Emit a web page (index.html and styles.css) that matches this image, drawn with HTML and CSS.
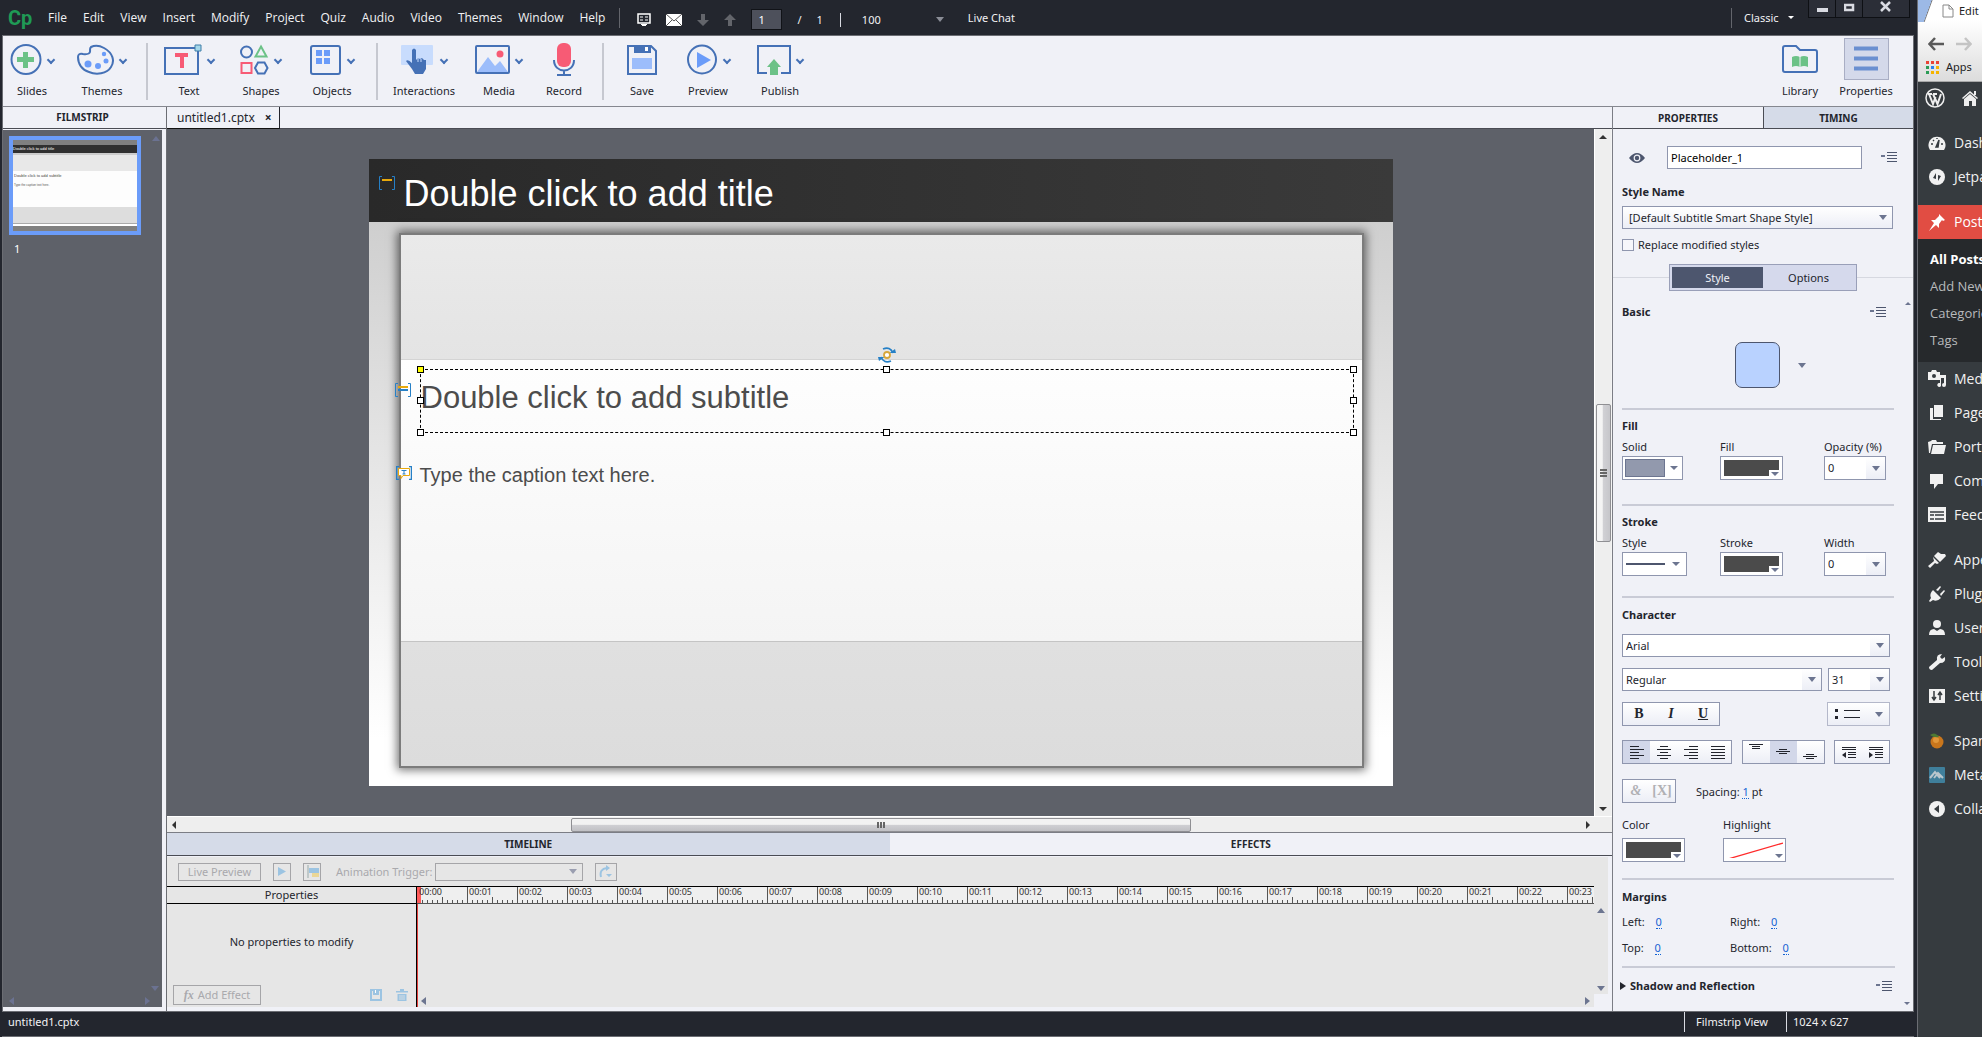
FILE: index.html
```html
<!DOCTYPE html>
<html lang="en">
<head>
<meta charset="utf-8">
<title>untitled1.cptx</title>
<link rel="stylesheet" href="styles.css">
</head>
<body>
<div class="app">
  <header class="menubar">
    <span class="logo">Cp</span>
    <nav class="menus">
      <button>File</button><button>Edit</button><button>View</button><button>Insert</button><button>Modify</button><button>Project</button><button>Quiz</button><button>Audio</button><button>Video</button><button>Themes</button><button>Window</button><button>Help</button>
    </nav>
    <span class="bar"></span>
    <div class="quick">
      <button aria-label="Comments"><svg width="14" height="14" viewBox="0 0 14 14"><path d="M1 1h12v9H1z" fill="none" stroke="#fff" stroke-width="1.500"/><path d="M3 4h3M8 4h3M3 7h3M8 7h3" stroke="#fff"/><path d="M4 11h6v1H9v1H5v-1H4z" fill="#fff"/></svg></button>
      <button aria-label="Mail"><svg width="16" height="12" viewBox="0 0 16 12"><path d="M0 0h16v12H0z" fill="#fff"/><path d="M0 0l8 7 8-7M0 12l6-6M16 12l-6-6" fill="none" stroke="#555"/></svg></button>
      <button aria-label="Next slide"><svg width="12" height="12" viewBox="0 0 12 12"><path d="M4 0h4v6h4l-6 6-6-6h4z" fill="#63656b"/></svg></button>
      <button aria-label="Previous slide"><svg width="12" height="12" viewBox="0 0 12 12"><path d="M4 12h4V6h4L6 0 0 6h4z" fill="#63656b"/></svg></button>
      <input class="page" type="text" value="1" aria-label="Slide">
      <span class="of">/</span><span>1</span>
    </div>
    <span class="bar short"></span>
    <div class="pick zoom"><select aria-label="Zoom"><option>100</option></select></div>
    <button class="chat">Live Chat</button>
    <span class="space"></span>
    <span class="bar"></span>
    <div class="pick mode"><select aria-label="Workspace"><option>Classic</option></select></div>
    <div class="winbtns">
      <button aria-label="Minimize"><svg width="11" height="12"><path d="M0 8h11v4H0z" fill="#d9dbe2"/></svg></button>
      <button aria-label="Maximize"><svg width="11" height="12"><path d="M1 5h8v5H1z" fill="none" stroke="#d9dbe2" stroke-width="2.500"/></svg></button>
      <button class="wide" aria-label="Close"><svg width="12" height="12"><path d="M1 2l9 9M10 2l-9 9" stroke="#d9dbe2" stroke-width="2.500"/></svg></button>
    </div>
  </header>

  <div class="frame">
  <div class="toolbar">
    <button class="tool"><span class="ico"><svg width="32" height="32"><circle cx="16" cy="15.500" r="14.500" class="ln"/><path d="M13 8h5v5h6v5h-6v6h-5v-6H7v-5h6z" fill="#6cc287"/></svg><i class="chev"></i></span>Slides</button>
    <button class="tool"><span class="ico"><svg width="37" height="32"><path d="M14 3q6-3 13 1c9 5 11 13 7 19-4 7-15 8-22 5C5 26 1 20 1 13q0-4 5-3 8 1 7-4 0-2 1-3z" class="ln"/><g fill="#6b9cf9"><circle cx="11" cy="20" r="3.500"/><circle cx="21" cy="22" r="3"/><circle cx="29" cy="17" r="2.500"/><circle cx="27" cy="10" r="2.200"/></g></svg><i class="chev"></i></span>Themes</button>
    <span class="sep"></span>
    <button class="tool"><span class="ico"><svg width="38" height="32"><path d="M1 4h33v26H1z" class="ln"/><path d="M11 9h13v4h-4v11h-4V13h-5z" fill="#f75b75"/><path d="M31 1h6v6h-6z" fill="#a6d8ea" stroke="#3f7fa8"/></svg><i class="chev"></i></span>Text</button>
    <button class="tool"><span class="ico"><svg width="29" height="32"><circle cx="6.500" cy="8" r="5.500" class="ln"/><path d="M21 2.500l5.500 10h-11z" fill="none" stroke="#6cc287" stroke-width="2"/><path d="M1.500 19h10v10h-10z" fill="none" stroke="#f75b75" stroke-width="2"/><path d="M18 18.500h6.500l3 5.500-3 5.500H18L15 24z" class="ln"/></svg><i class="chev"></i></span>Shapes</button>
    <button class="tool"><span class="ico"><svg width="32" height="32"><rect x="1" y="2" width="29" height="28" rx="2" class="ln"/><path d="M6 6h6v6H6zM14 6h6v6h-6zM6 14h6v6H6zM14 14h6v6h-6z" fill="#6b9cf9"/></svg><i class="chev"></i></span>Objects</button>
    <span class="sep"></span>
    <button class="tool"><span class="ico"><svg width="34" height="32"><rect x="0" y="1" width="32" height="20" rx="1" fill="#c8dcfd"/><path d="M11 6q2-3 4 0v10l2-2 2 1 2-1 2 2 2 0v9l-3 5h-8l-3-5-6-8q2-2 6 2z" fill="#4571b6"/><path d="M17 14v4M20 15v3" stroke="#c8dcfd" stroke-width="1"/></svg><i class="chev"></i></span>Interactions</button>
    <button class="tool"><span class="ico"><svg width="35" height="32"><path d="M2 28l11-15 7 9 5-5 8 11z" fill="#9cbdfb"/><rect x="1" y="2" width="33" height="27" rx="1" class="ln"/><circle cx="25" cy="10" r="3.500" fill="#f75b75"/></svg><i class="chev"></i></span>Media</button>
    <button class="tool"><span class="ico"><svg width="22" height="34"><rect x="4" y="0" width="14" height="24" rx="6" fill="#f75b75"/><path d="M1 17c0 14 20 14 20 0M11 27v5M4 32h14" class="ln"/></svg></span>Record</button>
    <span class="sep"></span>
    <button class="tool"><span class="ico"><svg width="32" height="32"><path d="M2 2h23l5 5v23H2z" class="ln"/><path d="M8 1h17v8H8z" fill="#4571b6"/><path d="M19 3h3v4h-3z" fill="#fff"/><path d="M6 14h20v11H6z" fill="#9cbdfb"/></svg></span>Save</button>
    <button class="tool"><span class="ico"><svg width="32" height="32"><circle cx="16" cy="15.500" r="14" class="ln"/><path d="M11 8l14 8-14 8z" fill="#6b9cf9"/></svg><i class="chev"></i></span>Preview</button>
    <button class="tool"><span class="ico"><svg width="34" height="32"><path d="M10 29H1V2h32v27h-9" class="ln"/><path d="M17 15l7 8h-3v8h-8v-8h-3z" fill="#6cc287"/></svg><i class="chev"></i></span>Publish</button>
    <span></span>
    <button class="tool"><span class="ico"><svg width="36" height="30"><path d="M1 3q0-2 2-2h11l4 4h15q2 0 2 2v18q0 2-2 2H3q-2 0-2-2z" class="ln"/><path d="M10 12q4-2 8 0 4-2 8 0v10q-4-2-8 0-4-2-8 0z" fill="#6cc287"/><path d="M18 11v12" stroke="#f0f1f7"/></svg></span>Library</button>
    <button class="tool on"><span class="ico"><svg width="24" height="26"><path d="M0 2.500h24M0 12.500h24M0 22.500h24" stroke="#6a8fd0" stroke-width="4"/></svg></span>Properties</button>
  </div>

  <div class="work">
    <aside class="film">
      <h2 class="head">FILMSTRIP</h2>
      <div class="filmbody">
        <i class="tri up faint right"></i>
        <button class="thumb" aria-label="Slide 1">
          <span class="tt">Double click to add title</span>
          <span class="tb"><span class="ts">Double click to add subtitle</span><span class="tc">Type the caption text here.</span></span>
        </button>
        <span class="num">1</span>
        <div class="filmend"><i class="tri down faint right"></i><div><i class="tri left faint"></i><i class="tri rgt faint"></i></div></div>
      </div>
    </aside>

    <main class="center">
      <div class="tabs"><div class="tab">untitled1.cptx <button aria-label="Close tab">×</button></div></div>
      <div class="stage">
        <div class="slide">
          <div class="stitle">Double click to add title</div>
          <div class="card"><div class="b1"></div><div class="b2"></div><div class="b3"></div></div>
          <div class="sub">Double click to add subtitle
            <i class="h nw"></i><i class="h n"></i><i class="h ne"></i><i class="h w"></i><i class="h e"></i><i class="h sw"></i><i class="h s"></i><i class="h se"></i>
          </div>
          <div class="cap">Type the caption text here.</div>
          <svg class="m1" width="16" height="14"><path d="M3 .5H.5v13H3M13 .5h2.500v13H13" fill="none" stroke="#2680c6"/><path d="M3 3h10v2H3z" fill="#e8a90c"/></svg>
          <svg class="m2" width="16" height="14"><path d="M3 .5H.5v13H3M13 .5h2.500v13H13" fill="none" stroke="#2680c6"/><path d="M3 3h10v2H3z" fill="#e8a90c"/><path d="M3 6h10v2H3z" fill="#2680c6"/></svg>
          <svg class="m3" width="16" height="14"><path d="M3 .5H.5v13H3M13 .5h2.500v13H13" fill="none" stroke="#2680c6" stroke-width="1.500"/><path d="M2.500 2.500h11v7H7l-2 3v-3H2.500z" fill="#fff" stroke="#e8a90c"/><path d="M5.500 4.500h5M8 4v4M6.500 8h3" stroke="#2680c6"/></svg>
          <svg class="rot" width="20" height="16" viewBox="0 0 20 16"><path d="M6 2q7-3 10 4M14 14q-7 3-10-4" fill="none" stroke="#2680c6" stroke-width="1.800"/><path d="M12.500 6H19l-1-4zM7.500 10H1l1 4z" fill="#2680c6"/><circle cx="10" cy="8" r="3" fill="#fff" stroke="#d7a63a" stroke-width="1.800"/></svg>
        </div>
      </div>
      <div class="vs"><i class="tri up dark"></i><div class="grip"><i></i></div><i class="tri down dark"></i></div>
      <div class="hs"><i class="tri left dark"></i><div class="grip"><i></i></div><i class="tri rgt dark"></i></div>
      <section class="time">
        <div class="ttabs"><button class="on">TIMELINE</button><button>EFFECTS</button></div>
        <div class="tpanel">
          <div class="ttools">
            <button class="box live">Live Preview</button>
            <button class="box sq" aria-label="Play"><svg width="8" height="9"><path d="M0 0l8 4.500L0 9z" fill="#9cc4e2"/></svg></button>
            <button class="box sq" aria-label="Effects panel"><svg width="13" height="13"><path d="M2 0v13" stroke="#9aa"/><path d="M3 3h10v5H3z" fill="#9cc4e2"/><path d="M6 8h7v4H6z" fill="#ead696"/></svg></button>
            <label for="trig">Animation Trigger:</label>
            <div class="pick trig"><select id="trig" disabled><option></option></select></div>
            <button class="box redo" aria-label="Motion path"><svg width="14" height="13"><path d="M2 12Q0 4 8 3" fill="none" stroke="#9cc4e2" stroke-width="2"/><path d="M7 0l4 3-4 3zM7 9h6l-3 3z" fill="#9cc4e2"/></svg></button>
          </div>
          <div class="tgrid">
            <div class="plist">
              <div class="phead">Properties</div>
              <p>No properties to modify</p>
              <div class="pfoot"><button class="box add"><b>fx</b> Add Effect</button><button class="flat" aria-label="Save effect"><svg width="12" height="12"><path d="M1 1h10v10H1z" fill="none" stroke="#9cc4e2" stroke-width="2"/><path d="M3 1h6v5H3z" fill="#9cc4e2"/><path d="M5 1h1v3H5z" fill="#fff"/></svg></button><button class="flat" aria-label="Delete effect"><svg width="12" height="12"><path d="M0 2h12v1.500H0zM4 0h4v2H4zM1.500 5h9v7h-9z" fill="#9cc4e2"/><path d="M4 6v5M6 6v5M8 6v5" stroke="#e6e6e6" stroke-width=".8"/></svg></button></div>
            </div>
            <div class="tracks">
              <div class="ruler"><span>00:00</span><span>00:01</span><span>00:02</span><span>00:03</span><span>00:04</span><span>00:05</span><span>00:06</span><span>00:07</span><span>00:08</span><span>00:09</span><span>00:10</span><span>00:11</span><span>00:12</span><span>00:13</span><span>00:14</span><span>00:15</span><span>00:16</span><span>00:17</span><span>00:18</span><span>00:19</span><span>00:20</span><span>00:21</span><span>00:22</span><span>00:23</span></div>
              <div class="tfoot"><i class="tri left slate"></i><i class="tri rgt slate"></i></div>
            </div>
            <div class="tscroll"><i class="tri up slate"></i><i class="tri down slate"></i></div>
          </div>
        </div>
      </section>
    </main>

    <aside class="props">
      <div class="ptabs"><button>PROPERTIES</button><button class="on">TIMING</button></div>
      <div class="pbody">
        <div class="namerow">
          <svg width="16" height="10"><path d="M0 5q8-10 16 0-8 10-16 0z" fill="#4d566e"/><circle cx="8" cy="5" r="2.800" fill="none" stroke="#f0f1f7" stroke-width="1.200"/></svg>
          <input type="text" value="Placeholder_1" aria-label="Name">
          <button class="menu" aria-label="Panel menu"></button>
        </div>
        <h3 class="stylename"><label for="stylesel">Style Name</label></h3>
        <div class="pick stylepick"><select id="stylesel"><option>[Default Subtitle Smart Shape Style]</option></select></div>
        <label class="check"><input type="checkbox">Replace modified styles</label>
        <div class="toggle"><div><button class="on">Style</button><button>Options</button></div></div>
        <div class="hrow basic"><h3>Basic</h3><button class="menu" aria-label="Basic menu"></button><i class="tri up slate sm"></i></div>
        <div class="swrow"><button class="swatch" aria-label="Shape"></button><i class="tri down slate"></i></div>
        <section class="sect g24">
          <h3>Fill</h3>
          <div class="cols">
            <label for="solid">Solid</label><label for="fill">Fill</label><label for="opac">Opacity (%)</label>
            <button id="solid" class="color solid"><i></i><i class="tri down slate"></i></button>
            <button id="fill" class="color"><i></i><i class="tri down slate"></i></button>
            <div class="pick w62"><select id="opac"><option>0</option></select></div>
          </div>
        </section>
        <section class="sect g20">
          <h3>Stroke</h3>
          <div class="cols">
            <label for="sty">Style</label><label for="stro">Stroke</label><label for="wid">Width</label>
            <button id="sty" class="color line"><i></i><i class="tri down slate"></i></button>
            <button id="stro" class="color"><i></i><i class="tri down slate"></i></button>
            <div class="pick w62"><select id="wid"><option>0</option></select></div>
          </div>
        </section>
        <section class="sect char">
          <h3>Character</h3>
          <div class="pick field"><select aria-label="Font family"><option>Arial</option></select></div>
          <div class="row">
            <div class="pick field grow"><select aria-label="Font style"><option>Regular</option></select></div>
            <div class="pick field w62"><select aria-label="Font size"><option>31</option></select></div>
          </div>
          <div class="row">
            <div class="grp biu"><button><b>B</b></button><button><em>I</em></button><button><u>U</u></button></div>
            <button class="grp list" aria-label="Bullets"><svg width="26" height="12"><path d="M0 1h3v3H0zM0 8h3v3H0z" fill="#23252d" class="f"/><path d="M9 2.500h16M9 9.500h16" stroke="#23252d"/></svg><i class="tri down slate"></i></button>
          </div>
          <div class="row align">
            <div class="grp"><button class="on" aria-label="Left"><svg width="14" height="13"><path d="M0 .5h9M0 3.500h14M0 6.500h9M0 9.500h14M0 12.500h9" /></svg></button><button aria-label="Center"><svg width="14" height="13"><path d="M3 .5h8M0 3.500h14M3 6.500h8M0 9.500h14M3 12.500h8"/></svg></button><button aria-label="Right"><svg width="14" height="13"><path d="M5 .5h9M0 3.500h14M5 6.500h9M0 9.500h14M5 12.500h9"/></svg></button><button aria-label="Justify"><svg width="14" height="13"><path d="M0 .5h14M0 3.500h14M0 6.500h14M0 9.500h14M0 12.500h14"/></svg></button></div>
            <div class="grp"><button class="vt" aria-label="Top"><svg width="14" height="6"><path d="M0 .5h14M3 2.500h8M3 4.500h8" /></svg></button><button class="on" aria-label="Middle"><svg width="14" height="6"><path d="M3 .5h8M0 2.500h14M3 4.500h8"/></svg></button><button class="vb" aria-label="Bottom"><svg width="14" height="6"><path d="M3 .5h8M0 2.500h14M3 4.500h8"/></svg></button></div>
            <div class="grp"><button aria-label="Outdent"><svg width="14" height="13"><path d="M0 1.500h14M0 3.500h14M6 6.500h8M6 8.500h8M6 11.500h8"/><path d="M4 6v6L0 9z" class="f"/></svg></button><button aria-label="Indent"><svg width="14" height="13"><path d="M0 1.500h14M0 3.500h14M6 6.500h8M6 8.500h8M6 11.500h8"/><path d="M0 6v6l4-3z" class="f"/></svg></button></div>
          </div>
          <div class="row amp">
            <div class="grp dim"><button><em>&amp;</em></button><button>[X]</button></div>
            <span class="spacing">Spacing: <a href="#">1</a> pt</span>
          </div>
          <div class="cols colrs">
            <label for="col">Color</label><label for="hil">Highlight</label><span></span>
            <button id="col" class="color"><i></i><i class="tri down slate"></i></button>
            <button id="hil" class="color none"><svg width="56" height="18"><path d="M1 17L56 1" stroke="#ff2a2a" stroke-width="1.300"/></svg><i class="tri down slate"></i></button>
          </div>
        </section>
        <section class="sect marg">
          <h3>Margins</h3>
          <div class="m2col"><span>Left: <a href="#">0</a></span><span>Right: <a href="#">0</a></span><span>Top: <a href="#">0</a></span><span>Bottom: <a href="#">0</a></span></div>
        </section>
        <section class="sect shad">
          <div class="hrow"><i class="tri rgt black"></i><h3>Shadow and Reflection</h3><button class="menu" aria-label="Shadow menu"></button></div>
          <i class="tri down slate sm end"></i>
        </section>
      </div>
    </aside>
  </div>
  </div>

  <footer class="status"><span>untitled1.cptx</span><span class="s2">Filmstrip View</span><span class="s3">1024 x 627</span></footer>
</div>

<div class="browser">
  <div class="chrome">
    <div class="ctab"><i></i><svg width="12" height="14"><path d="M1 1h6l4 4v8H1zM7 1v4h4" fill="#fff" stroke="#888"/></svg>Edit</div>
    <div class="cnav"><button aria-label="Back"><svg width="16" height="14"><path d="M7 1L1.500 7 7 13M2 7h14" fill="none" stroke="#5a5a5a" stroke-width="2.500"/></svg></button><button aria-label="Forward"><svg width="16" height="14"><path d="M9 1l5.500 6L9 13M14 7H0" fill="none" stroke="#c4c4c4" stroke-width="2.500"/></svg></button></div>
    <div class="capps"><svg width="13" height="13"><path d="M0 0h3v3H0zM5 0h3v3H5zM10 0h3v3h-3z" fill="#ea4335"/><path d="M0 5h3v3H0z" fill="#2c9c56"/><path d="M5 5h3v3H5z" fill="#2b80ee"/><path d="M10 5h3v3h-3zM10 10h3v3h-3z" fill="#f5b400"/><path d="M0 10h3v3H0z" fill="#2c9c56"/><path d="M5 10h3v3H5z" fill="#f5b400"/></svg>Apps</div>
  </div>
  <div class="wpbar"><svg width="20" height="20"><circle cx="10" cy="10" r="9" fill="none" stroke="#eee" stroke-width="1.500"/><path d="M4 6l4 10 2.500-7M8 6l4.500 10L16 6M3 6h4M8 6h4" fill="none" stroke="#eee" stroke-width="2"/></svg><svg width="16" height="16"><path d="M0 8l8-7 8 7-1 1-7-6-7 6zM12 1h2v4h-2z" fill="#eee"/><path d="M2 9l6-5 6 5v7h-4v-5H7v5H2z" fill="#eee"/></svg></div>
  <nav class="wp">
    <a href="#"><svg width="18" height="18"><path d="M1 14a8.500 8.500 0 1 1 16 0l-1 2H2z" fill="#f1f1f1"/><path d="M8 13l3-7-1 7zM3 10h2M13 10h2M5 6l1 1M9 4v1" stroke="#363b3f" stroke-width="1.500"/></svg>Dashboard</a>
    <a href="#"><svg width="18" height="18"><circle cx="9" cy="9" r="8" fill="#f1f1f1"/><path d="M8 5v6l-3-1zM10 13V7l3 1z" fill="#363b3f"/></svg>Jetpack</a>
    <a href="#" class="cur gap"><svg width="18" height="18"><path d="M11 1l6 6-2 1-1-1-3 4 0 4-3-3-7 6 5-8-3-3h4l4-4z" fill="#fff"/></svg>Posts</a>
    <div class="subnav"><a href="#" class="b">All Posts</a><a href="#">Add New</a><a href="#">Categories</a><a href="#">Tags</a></div>
    <a href="#"><svg width="18" height="18"><path d="M0 2h3l1-2h4l1 2h3v8H0zM12 5h6v10a2 2 0 1 1-2-2V8h-3v8a2 2 0 1 1-2-3h1z" fill="#f1f1f1"/><circle cx="6" cy="6" r="2" fill="#363b3f"/></svg>Media</a>
    <a href="#"><svg width="18" height="18"><path d="M6 1h9v12H6zM2 4h3v11h8v1H2z" fill="#f1f1f1"/></svg>Pages</a>
    <a href="#"><svg width="18" height="18"><path d="M0 4l3-1 1-1h4l1 2h6v2H4L2 15H1zM5 7h13l-2 9H3z" fill="#f1f1f1"/></svg>Portfolio</a>
    <a href="#"><svg width="18" height="18"><path d="M2 2h13v10H10l-4 5v-5H2z" fill="#f1f1f1"/></svg>Comments</a>
    <a href="#"><svg width="18" height="18"><path d="M0 1h18v15H0z" fill="#f1f1f1"/><path d="M2 6h14M2 9h4M7 9h9M2 13h4M7 13h9" stroke="#363b3f" stroke-width="1.500"/></svg>Feedback</a>
    <a href="#" class="gap"><svg width="18" height="18"><path d="M6 5l4-4 3 2h4l1 2-6 6zM5 6l6 6-2 1-2-1-5 5-2-2 6-5z" fill="#f1f1f1"/></svg>Appearance</a>
    <a href="#"><svg width="18" height="18"><path d="M5 5l8 8q-4 4-8 2l-3 2-1-1 2-3q-2-4 2-8zM8 5l4-4 1 1-3 4zM12 9l4-4 1 1-4 5z" fill="#f1f1f1"/></svg>Plugins</a>
    <a href="#"><svg width="18" height="18"><circle cx="9" cy="5" r="4" fill="#f1f1f1"/><path d="M1 16q0-6 5-6l3 2 3-2q5 0 5 6z" fill="#f1f1f1"/></svg>Users</a>
    <a href="#"><svg width="18" height="18"><path d="M17 4q1 6-5 6l-8 7q-3 0-3-3l8-7q-1-6 5-6l-2 3 2 2z" fill="#f1f1f1"/></svg>Tools</a>
    <a href="#"><svg width="18" height="18"><path d="M1 2h16v14H1z" fill="#f1f1f1"/><path d="M6 4v9M4 10l2 3 2-3M12 13V5M10 8l2-3 2 3" fill="none" stroke="#363b3f" stroke-width="1.500"/></svg>Settings</a>
    <a href="#" class="gap"><svg width="18" height="18"><circle cx="9" cy="10" r="6.500" fill="#c9761c"/><circle cx="8" cy="8" r="3" fill="#e2973a"/><path d="M2 3q5-4 9 2-5 1-9-2z" fill="#4d7a33"/></svg>Spam</a>
    <a href="#"><svg width="18" height="18"><rect x="1" y="1" width="16" height="16" rx="1" fill="#3f7f9b"/><path d="M2 12l5-6 5 6M6 12l4-5 5 5" fill="none" stroke="#b9c6cc" stroke-width="2"/></svg>Meta Slider</a>
    <a href="#"><svg width="18" height="18"><circle cx="9" cy="9" r="8" fill="#f1f1f1"/><path d="M11 5v8L6 9z" fill="#363b3f"/></svg>Collapse menu</a>
  </nav>
</div>
</body>
</html>
```
FILE: styles.css
```css
* { box-sizing: border-box; }
body { margin: 0; min-height: 100vh; display: grid; grid-template-columns: minmax(0, 1fr) 64px; background: #23262e; font: 11px/16px "Noto Sans", "Open Sans", sans-serif; color: #23252d; }
button, input, select { font: inherit; color: inherit; margin: 0; }
button { background: none; border: 0; padding: 0; cursor: pointer; white-space: nowrap; }
h2, h3, p { margin: 0; font-size: 11px; }
svg { display: block; flex: none; }
.app { display: flex; flex-direction: column; min-height: 100vh; background: #23262e; border-right: 1px solid #6b6d73; padding: 0 3px 0 2px; }

/* triangles */
.tri { flex: none; width: 0; height: 0; border: 4px solid transparent; color: #6c7590; }
.tri.down { border-top: 5px solid; border-bottom: 0; }
.tri.up { border-bottom: 5px solid; border-top: 0; }
.tri.left { border-right: 5px solid; border-left: 0; }
.tri.rgt { border-left: 5px solid; border-right: 0; }
.tri.faint { color: #6b7291; }
.tri.dark { color: #333; border-width: 4px; }
.tri.black { color: #23252d; border-left-width: 6px; }
.tri.sm { border-width: 3px; }
.tri.sm.up, .tri.dark.up { border-top-width: 0; }
.tri.sm.down, .tri.dark.down { border-bottom-width: 0; }
.tri.dark.left { border-left-width: 0; }
.tri.dark.rgt { border-right-width: 0; }

/* drop-downs */
.pick { display: grid; align-items: center; background: linear-gradient(#fff, #eceef6); border: 1px solid #8f96ae; height: 23px; }
.pick select { grid-area: 1 / 1; appearance: none; background: none; border: 0; outline: 0; width: 100%; height: 100%; padding: 0 20px 0 6px; color: #23252d; opacity: 1; }
.pick::after { content: ""; grid-area: 1 / 1; justify-self: end; margin-right: 5px; border: 4px solid transparent; border-top: 5px solid #6c7590; border-bottom: 0; pointer-events: none; }
.pick.field select, .pick.w62 select { background: linear-gradient(#fff, #fff) 0 0 / calc(100% - 19px) 100% no-repeat; padding-left: 3px; }
.w62 { width: 62px; }

/* menu bar */
.menubar { display: flex; align-items: center; height: 35px; color: #f2f2f4; font-size: 12px; }
.logo { width: 46px; padding-left: 6px; color: #1f9a55; font: 700 20px/24px Roboto, sans-serif; }
.menus { display: flex; gap: 16px; margin-right: 14px; font-family: "Open Sans", "Noto Sans", sans-serif; }
.bar { width: 1px; height: 20px; background: #63656c; }
.bar.short { height: 14px; background: #d9dbe2; margin-top: 5px; }
.quick { display: flex; align-items: center; margin: 4px 17px 0; gap: 15px; font-size: 11px; }
.page { width: 31px; height: 21px; background: #4d505b; border: 1px solid #111318; padding: 0 6px; color: #fff; }
.zoom.pick, .mode.pick { background: none; border: 0; }
.zoom.pick { width: 90px; margin: 4px 0 0 15px; font-size: 11px; }
.zoom.pick select, .mode.pick select { color: #f2f2f4; }
.zoom.pick::after { border-top-color: #8a8d96; margin-right: 2px; }
.chat { margin-left: 22px; font-size: 11px; }
.space { flex: 1; }
.mode.pick { width: 67px; margin-right: 9px; font-size: 11px; }
.mode.pick::after { border-width: 3px 3px 0; border-top-color: #fff; }
.mode.pick select { padding: 0 0 0 12px; }
.winbtns { display: flex; align-self: flex-start; height: 18px; margin-right: 4px; border: 1px solid #0e1014; border-top: 0; background: #2b2e37; }
.winbtns button { width: 27px; display: grid; justify-content: center; border-right: 1px solid #0e1014; }
.winbtns .wide { width: 46px; border: 0; }

.frame { flex: 1; display: flex; flex-direction: column; border: 1px solid #6b6d73; background: #f0f1f7; }

/* tool bar */
.toolbar { display: grid; grid-template-columns: 58px 82px 8px 76px 68px 74px 16px 78px 72px 58px 20px 58px 74px 70px minmax(0, 1fr) 54px 78px 8px; height: 71px; border-bottom: 1px solid #85878f; }
.tool { display: flex; flex-direction: column; align-items: center; padding-top: 2px; }
.ico { display: flex; align-items: center; gap: 5px; height: 43px; margin-bottom: 2px; }
.tool.on .ico { width: 45px; height: 42px; justify-content: center; background: #d4d9ea; border: 1px solid #a9aec4; margin-bottom: 3px; }
.ln { fill: none; stroke: #4571b6; stroke-width: 2; }
.chev { width: 6px; height: 6px; margin: 0 1px; border: solid #4571b6; border-width: 0 2px 2px 0; transform: rotate(45deg); }
.sep { justify-self: center; width: 2px; height: 57px; margin-top: 7px; background: #c6c8d0; }

/* workspace */
.work { flex: 1; display: grid; grid-template-columns: 164px minmax(0, 1fr) 301px; }
.head { height: 22px; padding-right: 4px; font-size: 10px; line-height: 20px; text-align: center; border-bottom: 1px solid #4a4c54; }
.film { display: flex; flex-direction: column; border-right: 1px solid #6b6d73; padding-bottom: 4px; }
.filmbody { flex: 1; display: grid; grid-template-columns: 136px 1fr; grid-template-rows: auto auto 1fr; margin: 1px 4px 0 0; padding: 6px 0 0 6px; background: #5e6169; }
.filmbody > .up { grid-area: 1 / 2; justify-self: center; margin-left: 4px; }
.thumb { grid-area: 1 / 1; width: 132px; height: 99px; border: 4px solid #6b9cf9; background: #808080; padding: 5px 0; text-align: left; overflow: hidden; }
.thumb span { display: block; font-family: "Liberation Sans", Arial, sans-serif; }
.tt { height: 8px; background: #303030; color: #fff; font-size: 4px; line-height: 8px; }
.tb { height: 73px; padding: 20px 1px 0; background: linear-gradient(#ccc 0 2px, #e8e8e8 2px 18px, #fdfdfd 18px 54px, #ddd 54px 70px, #aaa 70px 71px, #fff 71px); }
.ts { font-size: 4px; line-height: 6px; color: #444; }
.tc { font-size: 3px; line-height: 12px; color: #555; }
.num { grid-area: 2 / 1; padding: 6px 5px; color: #fff; }
.filmend { grid-area: 3 / 1 / 4 / 3; align-self: end; display: grid; justify-items: end; gap: 6px; padding: 0 3px 2px 0; }
.filmend div { width: 100%; display: flex; justify-content: space-between; padding-right: 9px; }

.center { display: grid; grid-template-columns: minmax(0, 1fr) 18px; grid-template-rows: 22px minmax(660px, 1fr) 17px 178px; }
.tabs { grid-column: 1 / 3; border-bottom: 1px solid #4a4c54; }
.tab { width: 113px; height: 22px; padding-left: 10px; border-right: 1px solid #23252d; border-bottom: 1px solid #111; font-size: 12px; line-height: 21px; white-space: nowrap; }
.tab button { margin-left: 7px; line-height: 14px; font-weight: 700; }
.stage { display: grid; place-content: center; background: #5e6169; overflow: hidden; }
.slide { position: relative; width: 1024px; height: 627px; display: flex; flex-direction: column; background: linear-gradient(#cfcfcf 63px, #fff 580px); font-family: "Liberation Sans", Arial, sans-serif; }
.stitle { height: 63px; padding-left: 35px; font-size: 36px; line-height: 70px; color: #fff; background: linear-gradient(90deg, #292929, #3a3a3a); }
.card { margin: 11px 29px 18px 30px; flex: 1; display: flex; flex-direction: column; border: 2px solid #7c7c7c; box-shadow: 0 0 9px 2px rgba(0, 0, 0, .55); }
.b1 { flex: 124; background: linear-gradient(#eaeaea, #e4e4e4); border-bottom: 1px solid #d4d4d4; }
.b2 { flex: 283; background: linear-gradient(#fefefe, #f4f4f4); }
.b3 { flex: 124; background: linear-gradient(#e0e0e0, #dcdcdc); border-top: 1px solid #c4c4c4; }
.sub { position: absolute; left: 51px; top: 210px; width: 934px; height: 64px; border: 1px dashed #000; font-size: 31px; line-height: 56px; color: #4c4c4c; }
.cap { position: absolute; left: 51px; top: 303px; font-size: 20px; line-height: 26px; color: #4c4c4c; }
.h { position: absolute; width: 7px; height: 7px; border: 1px solid #000; background: #fff; }
.h.nw, .h.n, .h.ne { top: -4px; }
.h.w, .h.e { top: 27px; }
.h.sw, .h.s, .h.se { bottom: -4px; }
.h.nw, .h.w, .h.sw { left: -4px; }
.h.n, .h.s { left: 462px; }
.h.ne, .h.e, .h.se { right: -4px; }
.h.nw { background: #ff0; }
.m1, .m2, .m3, .rot { position: absolute; }
.m1 { left: 10px; top: 17px; }
.m2 { left: 26px; top: 224px; }
.m3 { left: 27px; top: 307px; }
.rot { left: 508px; top: 188px; }

.vs, .hs { display: flex; align-items: center; justify-content: space-between; background: #eeeeee; }
.vs { flex-direction: column; padding: 6px 0 5px; border-left: 1px solid #fff; border-right: 1px solid #f4f4f4; }
.vs .grip { width: 15px; height: 138px; display: grid; place-content: center; border: 1px solid #8f8f93; border-radius: 2px; background: linear-gradient(90deg, #f4f4f4 40%, #d0d0d4 50%, #c6c6ca); }
.vs .grip i { width: 7px; height: 8px; background: repeating-linear-gradient(#666 0 2px, transparent 2px 3px); }
.hs { grid-column: 1 / 3; padding: 0 22px 0 5px; border-bottom: 1px solid #7b7d85; border-top: 1px solid #fff; }
.hs .grip { width: 620px; height: 14px; display: grid; place-content: center; border: 1px solid #8f8f93; border-radius: 2px; background: linear-gradient(#f2f2f2 45%, #cfcfd3 50%, #c0c0c4); }
.hs .grip i { width: 8px; height: 6px; background: repeating-linear-gradient(90deg, #666 0 2px, transparent 2px 3px); }

/* timeline */
.time { grid-column: 1 / 3; display: flex; flex-direction: column; padding-bottom: 4px; }
.ttabs, .ptabs { display: grid; grid-template-columns: 1fr 1fr; height: 22px; border-bottom: 1px solid #4a4c54; font-weight: 700; font-size: 10px; line-height: 20px; }
.ttabs { height: 23px; }
.ttabs .on, .ptabs .on { background: #d5dbe8; }
.tpanel { flex: 1; display: flex; flex-direction: column; margin: 1px 4px 0 0; background: #e6e6e6; }
.ttools { display: flex; align-items: center; height: 29px; padding: 0 11px; color: #a9a9ad; flex: none; }
.box { height: 18px; border: 1px solid #a5a5a8; color: #a9a9ad; display: grid; place-content: center; grid-auto-flow: column; line-height: 14px; }
.live { width: 83px; margin-right: 12px; }
.sq { width: 18px; margin-right: 12px; }
.ttools label { margin: 0 3px; white-space: nowrap; }
.pick.trig { width: 148px; height: 18px; margin-right: 12px; background: #e6e6e6; border-color: #a5a5a8; }
.trig::after { border-top-color: #9a9eb0; }
.redo { width: 22px; }
.tgrid { flex: 1; display: grid; grid-template-columns: 250px minmax(0, 1fr) 14px; }
.plist { display: flex; flex-direction: column; border-top: 1px solid #000; border-right: 1px solid #000; }
.phead { height: 17px; border-bottom: 1px solid #000; text-align: center; line-height: 16px; }
.plist p { flex: 1; padding-top: 30px; text-align: center; font-weight: 400; }
.pfoot { display: flex; align-items: center; padding: 0 8px 2px 6px; gap: 14px; }
.add { width: 88px; height: 20px; margin-right: auto; gap: 4px; }
.add b { font-style: italic; font-family: "Liberation Serif", serif; font-size: 12px; }
.tracks { display: flex; flex-direction: column; justify-content: space-between; border-left: 1px solid #e2403c; }
.ruler { display: flex; height: 18px; margin-left: -1px; overflow: hidden; border-top: 1px solid #000; border-bottom: 1px solid #555; background: #efefef; font-size: 9px; line-height: 10px; }
.ruler span { flex: 0 0 50px; padding-left: 2px; color: #333; background: linear-gradient(#555, #555) 0 0 / 1px 100% no-repeat, linear-gradient(#555, #555) 25px 100% / 1px 6px no-repeat, repeating-linear-gradient(90deg, #555 0 1px, transparent 1px 5px) 0 100% / 100% 3px no-repeat; }
.ruler span:first-child { box-shadow: inset 4px 0 #ff5b5b; }
.tfoot { display: flex; justify-content: space-between; padding: 0 4px 2px 3px; }
.tscroll { display: flex; flex-direction: column; justify-content: space-between; align-items: center; padding: 22px 0 16px; background: linear-gradient(#f0f1f7, #f0f1f7) 0 100% / 100% 13px no-repeat; }

/* properties */
.props { border-left: 1px solid #7b7d85; min-width: 0; }
.ptabs .on { border-left: 1px solid #4a4c54; }
.pbody { padding: 17px 0 0 9px; }
.namerow { display: flex; align-items: center; height: 23px; padding: 0 16px 0 7px; }
.namerow input { width: 195px; height: 23px; margin: 0 auto 0 22px; border: 1px solid #8f96ae; padding: 0 3px; background: #fff; color: #000; }
.menu { width: 16px; height: 11px; background: linear-gradient(135deg, #6c7590, #6c7590) 0 3px / 4px 2px no-repeat, repeating-linear-gradient(#4d566e 0 1px, transparent 1px 3px) 100% 0 / 10px 10px no-repeat; }
.stylename { margin: 15px 0 6px; }
.stylepick { width: 271px; }
.check { display: flex; align-items: center; gap: 4px; margin-top: 8px; }
.check input { appearance: none; width: 12px; height: 12px; border: 1px solid #8f96ae; background: #f6f6fb; }
.toggle { margin: 11px 0 13px -9px; display: flex; justify-content: center; background: linear-gradient(#d6d8e0, #d6d8e0) 0 50% / 100% 1px no-repeat; }
.toggle div { display: grid; grid-template-columns: 1fr 1fr; width: 188px; height: 27px; padding: 2px; border: 1px solid #999fb8; background: #d5d9ec; }
.toggle .on { background: #4d566e; color: #f0f1f7; }
.hrow { display: flex; align-items: center; height: 16px; }
.hrow h3 { flex: 1; }
.hrow .menu { margin-right: 15px; }
.basic .menu { margin-right: 19px; }
.basic .tri { margin: -18px 2px 0 0; }
.swrow { display: flex; align-items: center; gap: 18px; margin: 22px 0 20px; padding-left: 113px; }
.swatch { width: 45px; height: 46px; border: 1px solid #4d566e; border-radius: 7px; background: #b9d2ff; }
.sect { border-top: 2px solid #c9cbd6; width: 272px; padding-top: 8px; }
.cols { display: grid; grid-template-columns: 98px 104px 62px; grid-template-rows: 16px 24px; row-gap: 1px; padding-top: 5px; }
.cols label { white-space: nowrap; }
.g24 { padding-bottom: 24px; }
.g20 { padding-bottom: 20px; }
.cols .pick { height: 24px; }
.color { width: 63px; height: 24px; border: 1px solid #8f96ae; background: #fff; display: grid; padding: 3px; }
.color > :first-child { grid-area: 1 / 1; background: #4b4b4b; height: 16px; }
.color .tri { grid-area: 1 / 1; place-self: end; border-width: 4px 4px 0; box-shadow: 0 0 0 2px #fff; background: #fff; }
.color.solid, .color.line { grid-template-columns: 40px 1fr; align-items: center; padding: 0 0 0 2px; }
.color.solid { width: 61px; }
.color.solid .tri, .color.line .tri { grid-area: 1 / 2; place-self: center; box-shadow: none; }
.solid > :first-child { background: #9299ad; height: 18px; border: 1px solid #6c7590; }
.color.line { width: 65px; grid-template-columns: 39px 1fr; padding-left: 3px; }
.color.line > :first-child { height: 2px; background: #4d566e; }
.color.none > :first-child { background: none; }
.char { padding: 9px 0 16px; }
.field { margin-top: 11px; width: 268px; }
.row { display: flex; justify-content: space-between; width: 268px; gap: 6px; }
.row .field.grow { width: auto; flex: 1; }
.row .field.w62 { width: 62px; }
.grp { display: flex; height: 24px; margin-top: 11px; border: 1px solid #8f96ae; background: linear-gradient(#fff, #eceef6); }
.grp button { width: 27px; display: grid; place-content: center; }
.grp .on { background: #d2d7e9; }
.grp path { stroke: #23252d; }
.grp .f { fill: #23252d; stroke: none; }
.biu, .dim { font-family: "Liberation Serif", serif; font-size: 14px; font-weight: 700; }
.biu button { width: 32px; }
.list { width: 63px; align-items: center; justify-content: center; gap: 14px; border-color: #b4b8ca; }
.align .grp { margin-top: 14px; }
.vt { padding-bottom: 11px; }
.vb { padding-top: 10px; }
.amp { justify-content: flex-start; gap: 20px; }
.amp .grp { margin-top: 15px; color: #b0b0b4; }
.amp .grp button { width: 26px; }
.spacing { margin-top: 20px; }
a { color: #1463d4; text-decoration: none; }
.props a { border-bottom: 1px dotted #1463d4; line-height: 12px; display: inline-block; }
.colrs { grid-template-columns: 101px 101px 62px; padding-top: 14px; row-gap: 5px; }
.marg { padding: 9px 0 10px; }
.m2col { display: grid; grid-template-columns: 108px 1fr; row-gap: 10px; margin-top: 9px; }
.m2col a { margin-left: 8px; }
.shad { width: auto; margin-right: 18px; padding-top: 10px; }
.shad .hrow { margin-right: -12px; }
.shad .tri.rgt { margin: 0 4px 0 -2px; }
.end { display: block; margin: 8px -15px 0 auto; }

.status { display: flex; align-items: center; height: 25px; border-bottom: 1px solid #6b6d73; padding: 0 0 4px 6px; color: #f2f2f4; }
.status span { white-space: nowrap; }
.s2 { margin-left: auto; width: 102px; }
.s2, .s3 { border-left: 1px solid #d9dbe2; line-height: 20px; padding-left: 11px; }
.s3 { width: 128px; padding-left: 6px; }

/* browser behind */
.browser { overflow: hidden; background: #363b3f; font-family: "Open Sans", sans-serif; white-space: nowrap; min-width: 0; }
.chrome { height: 82px; background: linear-gradient(#fff 20px, #dcdcdc); border-bottom: 1px solid #a8a8a8; font: 11px/16px "Noto Sans", sans-serif; color: #222; }
.ctab { display: flex; align-items: center; gap: 5px; height: 22px; }
.ctab i { width: 19px; height: 22px; background: linear-gradient(110deg, #9cb9e6 50%, #777 52%, transparent 56%); }
.cnav { display: flex; gap: 12px; padding: 10px 0 0 10px; height: 34px; }
.capps { display: flex; align-items: center; gap: 7px; padding: 3px 0 0 8px; }
.wpbar { display: flex; align-items: center; gap: 17px; height: 32px; padding-left: 7px; }
.wp { padding-top: 12px; font-size: 14px; }
.wp a { display: flex; align-items: center; gap: 8px; height: 34px; padding-left: 10px; color: #f1f1f1; }
.wp .gap { margin-top: 11px; }
.wp .cur { background: #e14d43; color: #fff; }
.subnav { padding: 6px 0 9px; background: #26292c; font-size: 13px; }
.wp .subnav a { height: 27px; padding-left: 12px; color: #b8babc; }
.wp .subnav .b { font-weight: 700; color: #fff; }
```
